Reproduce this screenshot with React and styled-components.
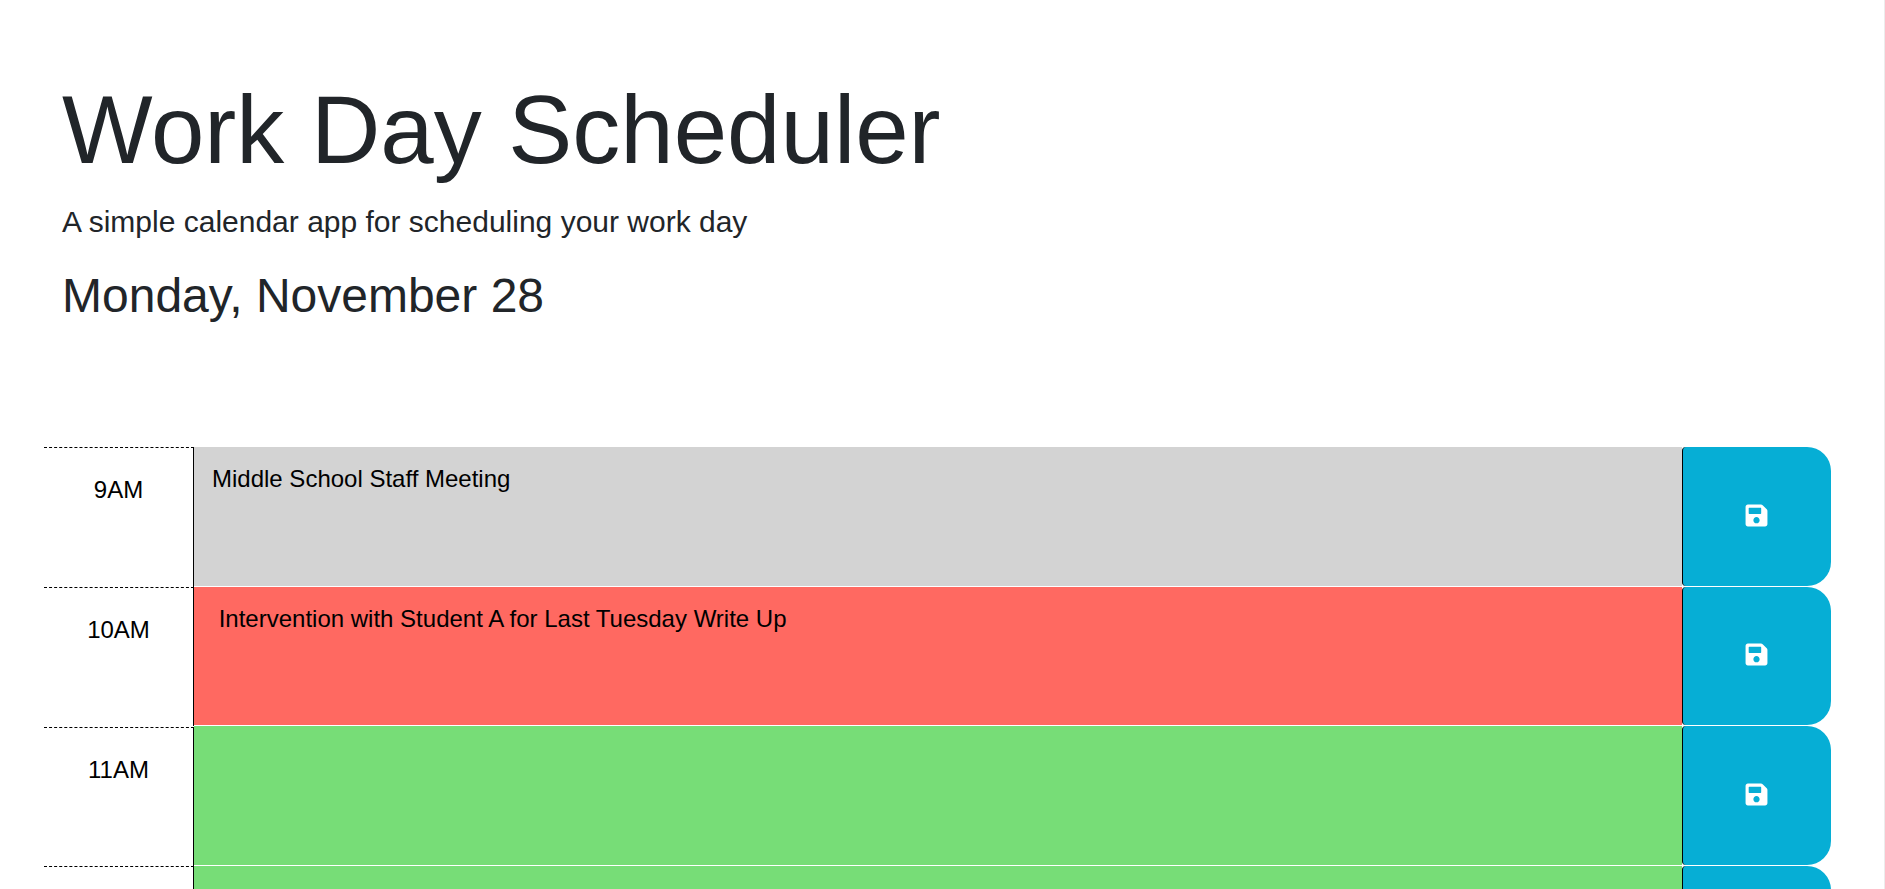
import { createGlobalStyle } from "styled-components";
import styled from "styled-components";
import { FaSave } from "react-icons/fa";

const GlobalStyle = createGlobalStyle`
  html, body {
    margin: 0;
    height: 889px;
    overflow: hidden;
    background: #fff;
  }
  body {
    font-family: "Liberation Sans", Arial, sans-serif;
    color: #212529;
    border-right: 1px solid #ececec;
    box-sizing: border-box;
  }
`;

const Jumbotron = styled.header`
  padding: 72px 62px 0;
  height: 447px;
  box-sizing: border-box;
`;
const Title = styled.h1`
  margin: 0;
  font-size: 96px;
  font-weight: 300;
  line-height: 1.2;
`;
const Lead = styled.p`
  margin: 12px 0 0;
  font-size: 30px;
  line-height: 1.5;
`;
const Today = styled.p`
  margin: 16px 0 0;
  font-size: 48px;
  line-height: 1.5;
`;
const Schedule = styled.main`
  padding: 0 53px 0 44px;
`;
const Row = styled.div`
  display: grid;
  grid-template-columns: 150px 1fr 149px;
  height: 139.5px;
`;
const Hour = styled.div`
  border-top: 1px dashed #000;
  border-right: 1px solid #000;
  color: #000;
  font-size: 24px;
  line-height: 28px;
  padding-top: 28px;
  text-align: center;
  margin-top: ${(props) => (props.$first ? "0" : "0.5px")};
`;
const Entry = styled.textarea`
  display: block;
  border: 0;
  border-bottom: 1px solid #fff;
  border-radius: 0;
  margin: 0;
  padding: 18px 18px 0;
  outline: none;
  resize: none;
  background: ${(props) => props.$color};
  color: #000;
  font-family: inherit;
  font-size: 24px;
  line-height: 28px;
  white-space: pre-wrap;
`;
const SaveButton = styled.button`
  display: flex;
  align-items: center;
  justify-content: center;
  padding: 0 1px 2px 0;
  border: 0;
  border-left: 1px solid #000;
  border-radius: 4px 24px 24px 4px;
  margin-bottom: 1px;
  background: #06aed5;
  color: #fff;
  font-size: 25px;
`;

const hours = [
  { time: "9AM", color: "#d3d3d3", text: "Middle School Staff Meeting" },
  { time: "10AM", color: "#ff6961", text: " Intervention with Student A for Last Tuesday Write Up" },
  { time: "11AM", color: "#77dd77", text: "" },
  { time: "12PM", color: "#77dd77", text: "" },
];

const App = () => {
  return (
    <>
      <GlobalStyle />
      <Jumbotron>
        <Title>Work Day Scheduler</Title>
        <Lead>A simple calendar app for scheduling your work day</Lead>
        <Today>Monday, November 28</Today>
      </Jumbotron>
      <Schedule>
        {hours.map((h, i) => (
          <Row key={h.time}>
            <Hour $first={i === 0}>{h.time}</Hour>
            <Entry $color={h.color} defaultValue={h.text} />
            <SaveButton aria-label="Save">
              <FaSave />
            </SaveButton>
          </Row>
        ))}
      </Schedule>
    </>
  );
};

export default App;
